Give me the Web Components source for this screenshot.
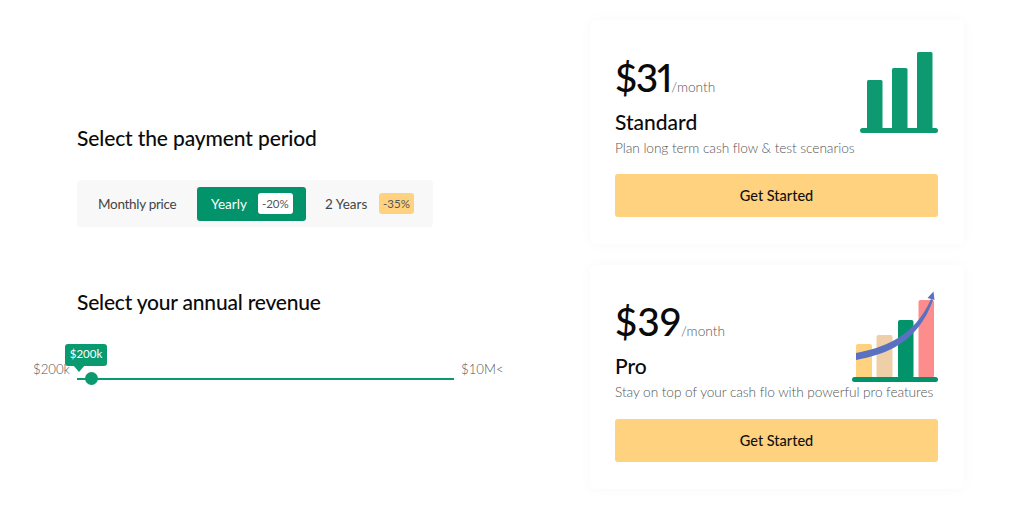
<!DOCTYPE html>
<html><head><meta charset="utf-8"><style>
html,body{margin:0;padding:0;background:#fff;font-family:Lato,"Open Sans",sans-serif}
</style></head><body>
<template id="t-page"><style>
:host{display:flex;width:1024px;height:508px;box-sizing:border-box;overflow:hidden}
.left{width:513px;box-sizing:border-box;padding:125px 0 0 77px;display:flex;flex-direction:column}
.right{padding:20px 0 0 77px;display:flex;flex-direction:column;gap:21px}
h2{margin:0;font:500 21px/26px Lato,sans-serif;color:#0b0b0b;white-space:nowrap}
.s1{letter-spacing:-.12px}.s2{letter-spacing:-.2px}
.a{margin-top:29px}.b{margin-top:62px}.c{margin-top:31px}
</style>
<div class="left"><h2 class="s1">Select the payment period</h2><period-toggle class="a"></period-toggle><h2 class="b s2">Select your annual revenue</h2><revenue-slider class="c"></revenue-slider></div>
<div class="right"><slot></slot></div></template>
<template id="t-toggle"><style>
:host{display:flex;align-items:center;width:356px;height:47px;box-sizing:border-box;background:#f8f8f8;border-radius:4px;padding:0 0 0 21px;font:400 13.5px Lato,sans-serif;color:#444;white-space:nowrap}
.m{width:99px;letter-spacing:-.3px}
.y{display:flex;align-items:center;width:109px;height:34px;box-sizing:border-box;padding:0 0 0 14px;background:#02936a;color:#fff;border-radius:3px}
.y .bd{margin-left:11px}
.t{margin-left:19px;width:44px}
.bd{display:block;height:21px;line-height:21px;border-radius:3px;font-size:11.5px;text-align:center;width:35px}
.w{background:#fff;color:#555}.o{background:#ffd27f;color:#555;margin-left:10px}
</style><span class="m">Monthly price</span><span class="y"><span>Yearly</span><span class="bd w">-20%</span></span><span class="t">2 Years</span><span class="bd o">-35%</span></template>
<template id="t-slider"><style>
:host{display:block;position:relative;width:377px;height:40px;font:300 13.2px Lato,sans-serif;color:#555}
.track{position:absolute;left:0;right:0;top:32px;height:2px;background:#0a9a70}
.thumb{position:absolute;left:8px;top:26px;width:13px;height:13px;border-radius:50%;background:#0a9a70}
.tip{position:absolute;left:-12px;top:-2px;width:42px;height:22px;line-height:20px;text-align:center;background:#0a9a70;color:#fff;border-radius:3px;font-size:11.5px;font-weight:400}
.tip::after{content:"";position:absolute;left:8px;top:21px;border:6px solid transparent;border-top:7px solid #0a9a70;border-bottom:0}
.min{position:absolute;left:-44px;top:15px}.max{position:absolute;left:384px;top:15px}
</style><span class="min">$200k</span><span class="max">$10M&lt;</span><div class="track"></div><div class="thumb"></div><div class="tip">$200k</div></template>
<template id="t-card"><style>
:host{display:block;width:374px;height:224px;box-sizing:border-box;padding:var(--pt,29px) 26px 0 25px;background:#fff;border-radius:6px;box-shadow:0 0 14px rgba(0,0,0,.03);position:relative}
.p{display:flex;align-items:baseline;height:56px}
.n{font:500 39px/56px Lato,sans-serif;color:#0a0a0a;font-feature-settings:"pnum";letter-spacing:var(--ls,0)}
.u{font:300 13.7px Lato,sans-serif;color:#555}
.t{font:500 21px/26px Lato,sans-serif;color:#0b0b0b;margin-top:4px}
.d{font:300 13.7px/20px Lato,sans-serif;color:#555;margin-top:3px;white-space:nowrap;letter-spacing:-.07px}
.btn{display:flex;align-items:center;justify-content:center;height:43px;margin-top:var(--bm,16px);background:#ffd27f;border-radius:3px;font:500 14.5px Lato,sans-serif;color:#111}
.ic{position:absolute;right:26px;top:var(--it)}
svg{display:block}
</style><div class="p"><span class="n"><slot name="price"></slot></span><span class="u">/month</span></div><div class="t"><slot name="title"></slot></div><div class="d"><slot name="desc"></slot></div><div class="btn">Get Started</div><div class="ic"><slot name="icon"></slot></div></template>
<pricing-page>
<price-card style="--it:32px;--ls:-1.3px"><span slot="price">$31</span><span slot="title">Standard</span><span slot="desc">Plan long term cash flow &amp; test scenarios</span>
<svg slot="icon" width="78" height="81" viewBox="0 0 78 81" style="display:block"><g fill="#0d9a70"><rect x="7" y="28" width="15.5" height="50" rx="1.5"/><rect x="32" y="16" width="15.5" height="62" rx="1.5"/><rect x="57" y="0" width="15.5" height="78" rx="1.5"/><rect x="0" y="76" width="78" height="5" rx="2.5"/></g></svg></price-card>
<price-card style="--it:25px;--pt:28px;--bm:17px"><span slot="price">$39</span><span slot="title">Pro</span><span slot="desc">Stay on top of your cash flo with powerful pro features</span>
<svg slot="icon" width="86" height="92" viewBox="0 0 86 92" style="display:block"><rect x="4" y="54" width="16" height="34" rx="2" fill="#ffd27f"/><rect x="24.5" y="45" width="16" height="43" rx="2" fill="#efcfa8"/><rect x="46" y="30" width="15.5" height="58" rx="2" fill="#02936a"/><rect x="66.5" y="10" width="15.5" height="78" rx="2" fill="#fd8d8c"/><rect x="0" y="87" width="86" height="5" rx="2.5" fill="#02936a"/><path d="M4 63C30 58 62 48 79 9L81 10C66 52 36 64 4 70Z" fill="#5a70c0"/><path d="M75.5 8L81.5 1.5L82.5 10Z" fill="#5a70c0"/></svg></price-card>
</pricing-page>
<script>
function def(tag,id){customElements.define(tag,class extends HTMLElement{constructor(){super();this.attachShadow({mode:'open'}).appendChild(document.getElementById(id).content.cloneNode(true));}});}
def('pricing-page','t-page');def('period-toggle','t-toggle');def('revenue-slider','t-slider');def('price-card','t-card');
</script>
</body></html>
